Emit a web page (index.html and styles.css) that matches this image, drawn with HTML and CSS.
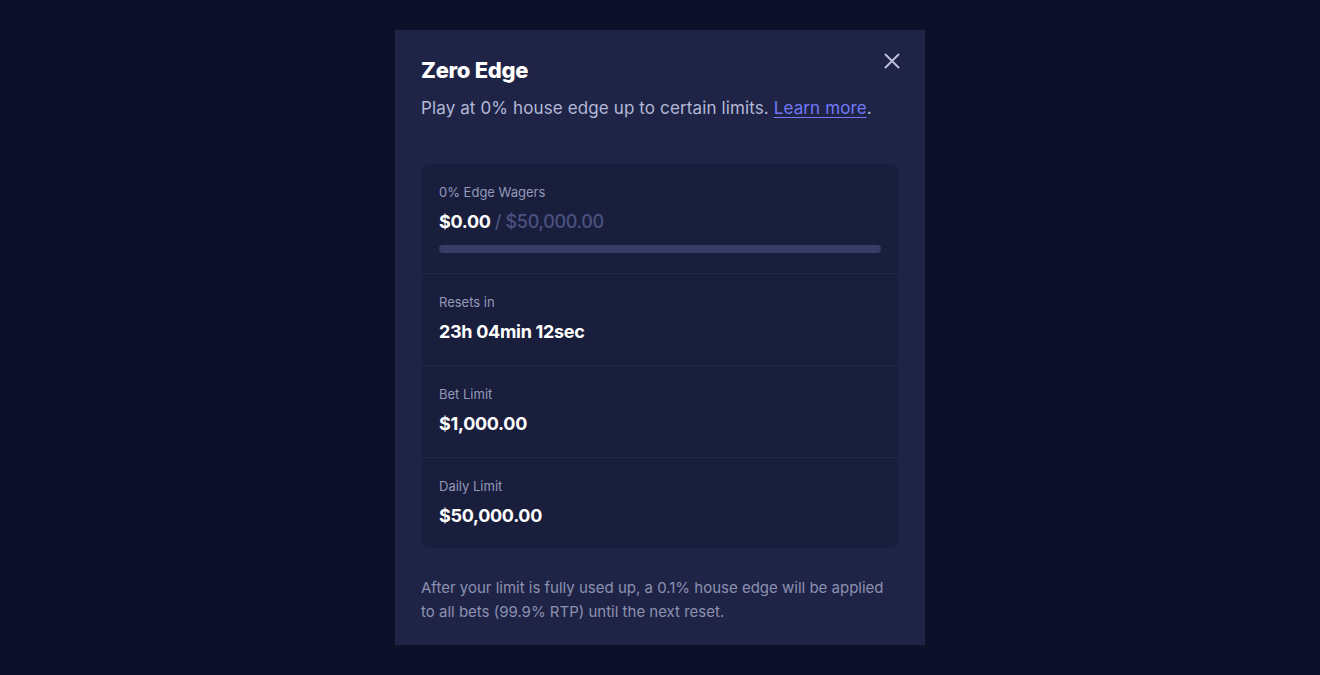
FILE: index.html
```html
<!DOCTYPE html>
<html>
<head>
<meta charset="utf-8">
<link rel="stylesheet" href="styles.css">
</head>
<body>
<div class="page">
  <div class="modal">
    <div class="head">
      <h1 class="title">Zero Edge</h1>
      <button class="close" aria-label="Close">
        <svg width="16" height="16" viewBox="0 0 16 16"><path d="M1.5 1.5 L14.5 14.5 M14.5 1.5 L1.5 14.5" stroke="#b9bed8" stroke-width="2" stroke-linecap="round"/></svg>
      </button>
    </div>
    <p class="sub">Play at 0% house edge up to certain limits. <a href="#" class="link">Learn more</a>.</p>
    <div class="card">
      <div class="row">
        <div class="label">0% Edge Wagers</div>
        <div class="value">$0.00 <span class="muted">/ $50,000.00</span></div>
        <div class="bar"></div>
      </div>
      <div class="row">
        <div class="label">Resets in</div>
        <div class="value">23h 04min 12sec</div>
      </div>
      <div class="row">
        <div class="label">Bet Limit</div>
        <div class="value">$1,000.00</div>
      </div>
      <div class="row">
        <div class="label">Daily Limit</div>
        <div class="value">$50,000.00</div>
      </div>
    </div>
    <p class="foot">After your limit is fully used up, a 0.1% house edge will be applied to all bets (99.9% RTP) until the next reset.</p>
  </div>
</div>
</body>
</html>
```
FILE: styles.css
```css
* { box-sizing: border-box; }
html, body { margin: 0; padding: 0; }
body {
  background: #0d1029;
  font-family: "Inter", "Noto Sans", sans-serif;
  height: 675px;
  overflow: hidden;
}
.page {
  display: flex;
  justify-content: center;
  padding-top: 30px;
}
.modal {
  width: 530px;
  height: 615px;
  background: #1f2447;
  padding: 26px 26px 22px;
}
.head {
  display: flex;
  justify-content: space-between;
  align-items: flex-start;
}
.title {
  margin: 0;
  font-size: 22px;
  line-height: 28px;
  font-weight: 800;
  color: #ffffff;
  letter-spacing: -0.3px;
}
.close {
  background: none;
  border: 0;
  padding: 0;
  margin: -3px -1px 0 0;
  width: 16px;
  height: 16px;
  cursor: pointer;
  display: flex;
}
.sub {
  margin: 12px 0 0;
  font-size: 17px;
  line-height: 24px;
  color: #b3b8d6;
  letter-spacing: 0.12px;
}
.link {
  color: #7278f5;
  text-decoration: underline;
  text-underline-offset: 3px;
}
.card {
  margin-top: 44px;
  background: #1a1e3d;
  border-radius: 10px;
  overflow: hidden;
}
.row {
  padding: 18px 18px 21px;
  border-top: 1px solid #222749;
}
.row:first-child { border-top: 0; padding-bottom: 20px; }
.row:last-child { padding-bottom: 20px; }
.label {
  font-size: 13px;
  line-height: 20px;
  color: #9499b9;
}
.value {
  margin-top: 8px;
  font-size: 18px;
  line-height: 24px;
  font-weight: 700;
  color: #ffffff;
  letter-spacing: -0.3px;
}
.muted {
  color: #4b5280;
  font-weight: 500;
}
.bar {
  margin-top: 11px;
  height: 8px;
  border-radius: 4px;
  background: #373d66;
}
.foot {
  margin: 28px 0 0;
  font-size: 15px;
  line-height: 24px;
  color: #8c91b0;
}
```
